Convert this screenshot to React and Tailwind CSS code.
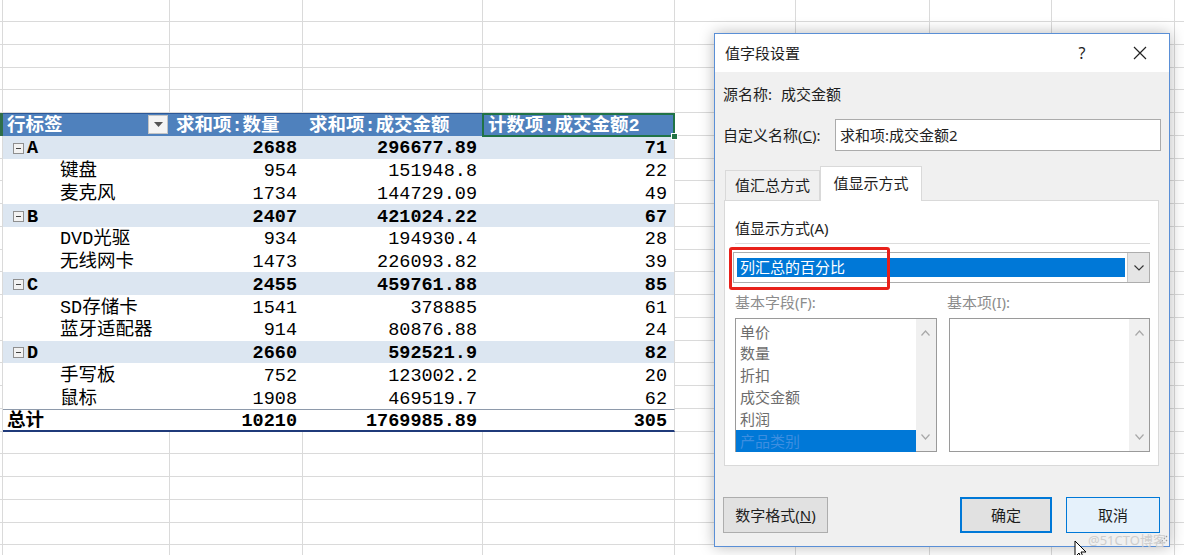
const pivot = [
  { type: "group", label: "A", v: ["2688", "296677.89", "71"] },
  { type: "item", label: "键盘", v: ["954", "151948.8", "22"] },
  { type: "item", label: "麦克风", v: ["1734", "144729.09", "49"] },
  { type: "group", label: "B", v: ["2407", "421024.22", "67"] },
  { type: "item", label: "DVD光驱", v: ["934", "194930.4", "28"] },
  { type: "item", label: "无线网卡", v: ["1473", "226093.82", "39"] },
  { type: "group", label: "C", v: ["2455", "459761.88", "85"] },
  { type: "item", label: "SD存储卡", v: ["1541", "378885", "61"] },
  { type: "item", label: "蓝牙适配器", v: ["914", "80876.88", "24"] },
  { type: "group", label: "D", v: ["2660", "592521.9", "82"] },
  { type: "item", label: "手写板", v: ["752", "123002.2", "20"] },
  { type: "item", label: "鼠标", v: ["1908", "469519.7", "62"] },
  { type: "total", label: "总计", v: ["10210", "1769985.89", "305"] },
]

const fields = ["单价", "数量", "折扣", "成交金额", "利润"]

function Blank({ w }) {
  return <div className={`${w} h-full shrink-0 border-r border-b border-[#dadada]`} />
}

function RightCells() {
  return (
    <>
      <Blank w="w-[121px]" />
      <Blank w="w-[134px]" />
      <Blank w="w-[122px]" />
      <Blank w="w-[123px]" />
      <div className="flex-1 h-full border-b border-[#dadada]" />
    </>
  )
}

function HeaderRow() {
  return (
    <div className="flex h-[22.75px] shrink-0">
      <div className="w-[3px] h-full bg-[#2f6e48]" />
      <div className="w-[167px] h-full bg-[#4f81bd] border-t border-[#2b5797] flex items-center pl-[4px] text-white font-bold">
        <span className="pt-[4px]">行标签</span>
        <span className="ml-auto mr-[2px] w-[20px] h-[19px] bg-[#f4f4f4] border border-[#c4c4c4] flex items-center justify-center">
          <svg width="9" height="5" viewBox="0 0 9 5"><path d="M0 0 L9 0 L4.5 5 Z" fill="#555" /></svg>
        </span>
      </div>
      <div className="w-[133px] h-full bg-[#4f81bd] border-t border-[#2b5797] flex items-center pl-[6px] pt-[4px] text-white font-bold">求和项:数量</div>
      <div className="w-[180px] h-full bg-[#4f81bd] border-t border-[#2b5797] flex items-center pl-[6px] pt-[4px] text-white font-bold">求和项:成交金额</div>
      <div className="relative w-[192px] h-full bg-[#4f81bd] border-t border-r border-[#2b5797] flex items-center pl-[5px] pt-[4px] text-white font-bold">
        计数项:成交金额2
        <span className="absolute -inset-[1px] border-2 border-[#217346]" />
        <span className="absolute -right-[4px] -bottom-[4px] w-[7px] h-[7px] bg-[#217346] border border-white" />
      </div>
      <RightCells />
    </div>
  )
}

function PivotRow({ row }) {
  const bg = row.type === "group" ? "bg-[#dce6f1]" : "bg-white"
  const bold = row.type === "item" ? "font-normal" : "font-bold"
  const lines = row.type === "total" ? "border-t border-t-[#8e9aab] border-b-2 border-b-[#1f3a7a]" : ""
  return (
    <div className="flex h-[22.75px] shrink-0">
      <div className="w-[3px] h-full border-r border-b border-[#dadada]" />
      <div className={`flex w-[672px] h-full pt-[5px] border-r border-r-[#dadada] ${bg} ${bold} ${lines}`}>
        <div className="w-[167px] h-full flex items-center">
          {row.type === "group" && (
            <>
              <span className="ml-[10px] -mt-[3px] w-[11px] h-[11px] border border-[#8f8f8f] bg-[#f2f2f2] flex items-center justify-center">
                <span className="w-[5px] h-px bg-[#444]" />
              </span>
              <span className="ml-[3px]">{row.label}</span>
            </>
          )}
          {row.type === "item" && <span className="ml-[57px]">{row.label}</span>}
          {row.type === "total" && <span className="ml-[4px]">{row.label}</span>}
        </div>
        <div className="w-[133px] h-full flex items-center justify-end pr-[6px]">{row.v[0]}</div>
        <div className="w-[180px] h-full flex items-center justify-end pr-[6px]">{row.v[1]}</div>
        <div className="w-[191px] h-full flex items-center justify-end pr-[7px]">{row.v[2]}</div>
      </div>
      <RightCells />
    </div>
  )
}

function EmptyRow() {
  return (
    <div className="flex h-[22.75px] shrink-0">
      <Blank w="w-[3px]" />
      <Blank w="w-[167px]" />
      <Blank w="w-[133px]" />
      <Blank w="w-[180px]" />
      <Blank w="w-[192px]" />
      <RightCells />
    </div>
  )
}

function Chevron({ up }) {
  return (
    <svg width="9" height="6" viewBox="0 0 9 6">
      <path d={up ? "M0.5 5.5 L4.5 1 L8.5 5.5" : "M0.5 0.5 L4.5 5 L8.5 0.5"} fill="none" stroke="#a8a8a8" strokeWidth="1.2" />
    </svg>
  )
}

function ListBox({ children }) {
  return (
    <div className="relative w-[202px] h-[134px] border border-[#9a9a9a] bg-white flex">
      <div className="flex-1 pt-[2px]">{children}</div>
      <div className="w-[20px] h-full bg-[#f0f0f0] flex flex-col items-center justify-between py-[11px]">
        <Chevron up />
        <Chevron />
      </div>
    </div>
  )
}

function Dialog() {
  return (
    <div className="absolute left-[714px] top-[33px] w-[456px] h-[514px] border border-[#5a8fd6] bg-[#f0f0f0] shadow-[0_0_14px_rgba(0,0,0,0.28)] flex flex-col font-['Noto_Sans','Noto_Sans_CJK_SC',sans-serif] text-[15px] text-[#1e1e1e]">
      <div className="h-[38px] shrink-0 bg-white flex items-center pl-[10px]">
        <span>值字段设置</span>
        <div className="ml-auto flex items-center pr-[6px]">
          <span className="w-[46px] text-center text-[16px]">?</span>
          <span className="w-[46px] ml-[12px] flex justify-center">
            <svg width="14" height="14" viewBox="0 0 14 14"><path d="M1 1 L13 13 M13 1 L1 13" stroke="#222" strokeWidth="1.2" /></svg>
          </span>
        </div>
      </div>
      <div className="flex-1 flex flex-col px-[8px]">
        <div className="mt-[12px] h-[20px] flex items-center gap-[9px]">
          <span>源名称:</span>
          <span>成交金额</span>
        </div>
        <div className="mt-[15px] h-[32px] flex items-center">
          <span className="w-[112px]">自定义名称(<span className="underline">C</span>):</span>
          <div className="flex-1 h-full border border-[#ababab] bg-white flex items-center pl-[4px]">求和项:成交金额2</div>
        </div>
        <div className="mt-[15px] h-[34px] flex items-end ml-[2px]">
          <div className="w-[95px] h-[30px] border border-b-0 border-[#d9d9d9] flex items-center justify-center">值汇总方式</div>
          <div className="relative z-10 w-[102px] h-[35px] -mb-[1px] bg-white border border-b-0 border-[#d9d9d9] flex items-center justify-center pb-[2px]">值显示方式</div>
        </div>
        <div className="ml-[1px] w-[435px] h-[266px] bg-white border border-[#d9d9d9] flex flex-col px-[8px]">
          <div className="mt-[17px] h-[20px] flex items-center pl-[2px]">值显示方式(A)</div>
          <div className="mt-[5px] h-px bg-[#dcdcdc] ml-[2px]" />
          <div className="relative mt-[8px] h-[31px] border border-[#adadad] bg-white flex">
            <div className="flex-1 my-[5px] ml-[3px] mr-[2px] bg-[#0078d7] text-white flex items-center pl-[3px]">列汇总的百分比</div>
            <div className="w-[22px] h-full bg-[#e5e5e5] border-l border-[#c8c8c8] flex items-center justify-center">
              <svg width="10" height="6" viewBox="0 0 10 6"><path d="M0.5 0.5 L5 5 L9.5 0.5" fill="none" stroke="#333" strokeWidth="1.1" /></svg>
            </div>
            <span className="absolute -left-[5px] -top-[6px] w-[161px] h-[43px] border-[3px] border-[#e8211a] rounded-[3px]" />
          </div>
          <div className="mt-[9px] h-[20px] flex items-center text-[#8c8c8c]">
            <span className="w-[214px] pl-[2px]">基本字段(F):</span>
            <span>基本项(I):</span>
          </div>
          <div className="mt-[6px] flex gap-[12px] ml-[2px]">
            <ListBox>
              {fields.map((f) => (
                <div key={f} className="h-[21.8px] flex items-center pl-[4px] text-[#6d6d6d]">{f}</div>
              ))}
              <div className="h-[21.8px] bg-[#0078d7] flex items-center pl-[4px] text-[#3d8ee0]">产品类别</div>
            </ListBox>
            <ListBox />
          </div>
        </div>
        <div className="mt-[31px] h-[36px] flex items-stretch">
          <button className="w-[105px] bg-[#e1e1e1] border border-[#adadad]">数字格式(<span className="underline">N</span>)</button>
          <button className="ml-auto w-[92px] bg-[#e1e1e1] border-2 border-[#0078d7]">确定</button>
          <button className="ml-[14px] mr-[1px] w-[94px] bg-[#e5f1fb] border border-[#0078d7]">取消</button>
        </div>
      </div>
      <svg className="absolute right-[1px] bottom-[1px]" width="11" height="11" viewBox="0 0 11 11">
        <path d="M10 2 L2 10 M10 6 L6 10" stroke="#9a9a9a" strokeWidth="1.2" strokeDasharray="1.5 1.5" />
      </svg>
    </div>
  )
}

export default function App() {
  const rows = []
  for (let r = 0; r < 25; r++) {
    if (r === 5) rows.push(<HeaderRow key={r} />)
    else if (r >= 6 && r <= 18) rows.push(<PivotRow key={r} row={pivot[r - 6]} />)
    else rows.push(<EmptyRow key={r} />)
  }
  return (
    <div className="relative w-[1184px] h-[555px] overflow-hidden bg-white">
      <div className="flex flex-col font-['Liberation_Mono','Noto_Sans_CJK_SC',monospace] text-[18.5px] text-black leading-none -mt-[0.75px]">
        {rows}
      </div>
      <Dialog />
      <span className="absolute left-[1088px] top-[531px] text-[13px] text-[#cdcdcd] font-['Noto_Sans','Noto_Sans_CJK_SC',sans-serif]">@51CTO博客</span>
      <svg className="absolute left-[1074px] top-[540px]" width="14" height="22" viewBox="0 0 14 22">
        <path d="M1 1 L1 17 L5 13 L8 20 L10 19 L7 12 L12 12 Z" fill="#fff" stroke="#000" strokeWidth="1" />
      </svg>
    </div>
  )
}
